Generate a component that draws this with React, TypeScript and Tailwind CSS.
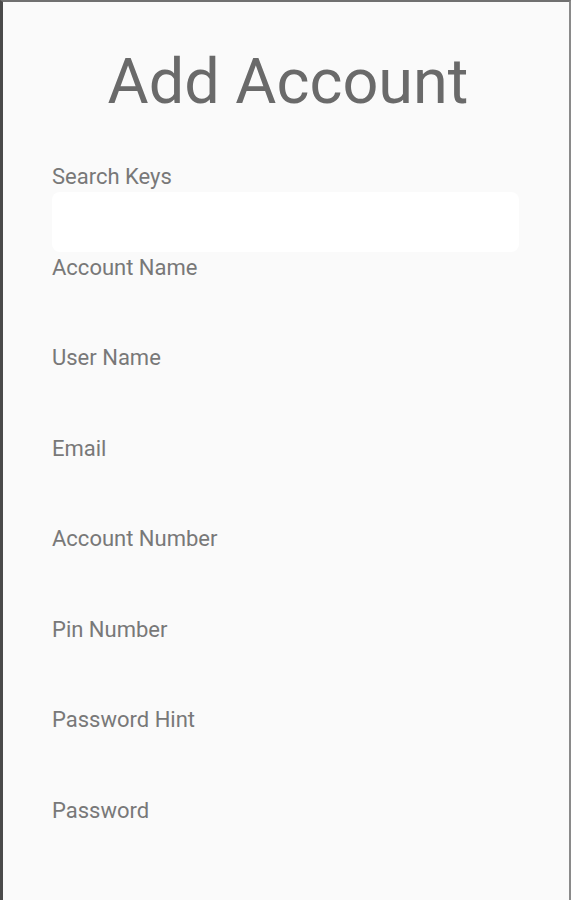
const fields = [
  "Search Keys",
  "Account Name",
  "User Name",
  "Email",
  "Account Number",
  "Pin Number",
  "Password Hint",
  "Password",
];

export default function App() {
  return (
    <div
      className="w-[571px] h-[900px] bg-[#fafafa] border-t-2 border-l-[3px] border-r-2 border-t-[#707070] border-l-[#4a4a4a] border-r-[#8a8a8a] overflow-hidden"
      style={{ fontFamily: "Roboto, 'Liberation Sans', sans-serif" }}
    >
      <h1 className="text-center text-[63px] leading-none text-[#6a6a6a] pt-[48px] pb-[49px] pl-1">
        Add Account
      </h1>
      <div className="flex flex-col pl-[49px] pr-[50px]">
        {fields.map((label, i) => (
          <div key={label} className="flex flex-col h-[90.5px]">
            <span className="text-[22px] leading-[30px] text-[#787878]">{label}</span>
            <input
              type={label === "Password" ? "password" : "text"}
              className={`h-[60px] rounded-lg outline-none px-3 ${
                i === 0 ? "bg-white" : "bg-transparent"
              }`}
            />
          </div>
        ))}
      </div>
    </div>
  );
}
